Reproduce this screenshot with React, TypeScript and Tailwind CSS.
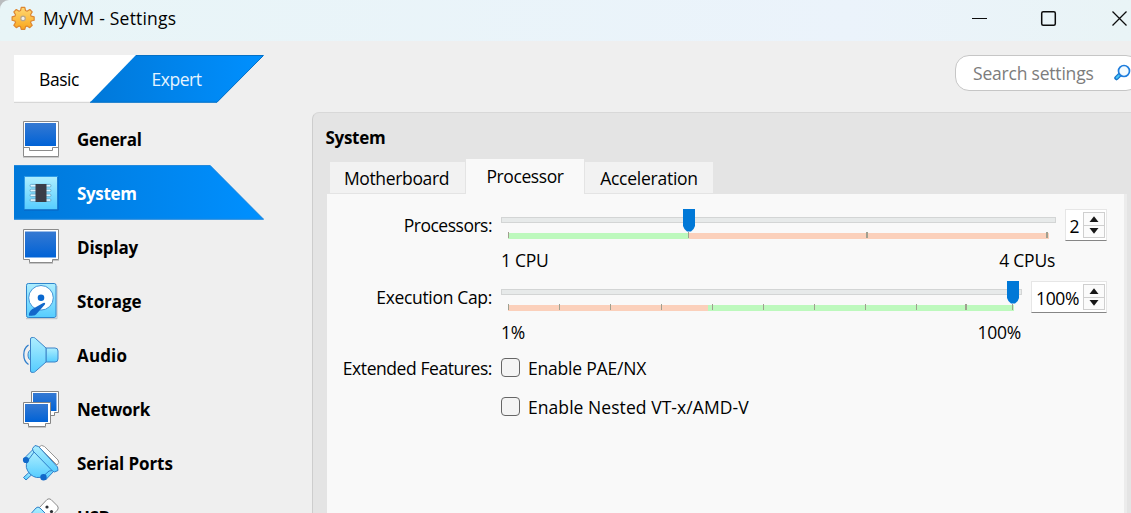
import type { ReactNode } from "react";

function GearIcon() {
  return (
    <svg width="25" height="25" viewBox="0 0 26 27" className="shrink-0">
      <defs>
        <linearGradient id="gear" x1="0" y1="0" x2="0" y2="1">
          <stop offset="0" stopColor="#ffd873" />
          <stop offset="1" stopColor="#f9a61c" />
        </linearGradient>
      </defs>
      <g fill="url(#gear)" stroke="#dd8630" strokeWidth="1.3" strokeLinejoin="round">
        <path d="M10.6 1.5h3.8l.8 3.4 1.6.7 3-1.8 2.6 2.6-1.8 3 .7 1.6 3.2.8v3.6l-3.2.8-.7 1.6 1.8 3-2.6 2.6-3-1.8-1.6.7-.8 3h-3.8l-.8-3-1.6-.7-3 1.8-2.6-2.6 1.8-3-.7-1.6-3-.8v-3.6l3-.8.7-1.6-1.8-3 2.6-2.6 3 1.8 1.6-.7z" />
        <circle cx="12.5" cy="13.4" r="2.4" fill="#f5f2ec" stroke="#b8a68a" />
      </g>
    </svg>
  );
}

function Defs() {
  return (
    <svg width="0" height="0" className="absolute">
      <defs>
        <linearGradient id="screen" x1="0" y1="0" x2="0" y2="1">
          <stop offset="0" stopColor="#3579d2" />
          <stop offset="1" stopColor="#0062d6" />
        </linearGradient>
        <linearGradient id="cyan" x1="0" y1="0" x2="0" y2="1">
          <stop offset="0" stopColor="#aeeefe" />
          <stop offset="1" stopColor="#56cdff" />
        </linearGradient>
      </defs>
    </svg>
  );
}

function GeneralIcon() {
  return (
    <svg width="38" height="38" viewBox="0 0 38 38">
      <path d="M1.5 1.5h35v35h-35z" fill="#fff" stroke="#8b8b8b" />
      <path d="M1.5 27.5h6v3h23v-3h6" fill="none" stroke="#8b8b8b" />
      <path d="M3 3h31v23H3z" fill="url(#screen)" />
      <path d="M1 37.5h36" stroke="#c9c9c9" />
    </svg>
  );
}

function SystemIcon() {
  return (
    <svg width="38" height="38" viewBox="0 0 38 38">
      <path d="M2.5 2.5h33v33h-33z" fill="url(#cyan)" stroke="#2e9be8" />
      <path d="M2 36h34.5M36 3v33" stroke="#0a63bd" fill="none" />
      <g fill="#dff6ff" stroke="#5c9fc4" strokeWidth=".8">
        <rect x="8" y="10.4" width="21" height="2.6" rx="1.3" />
        <rect x="8" y="15.2" width="21" height="2.6" rx="1.3" />
        <rect x="8" y="20" width="21" height="2.6" rx="1.3" />
        <rect x="8" y="24.8" width="21" height="2.6" rx="1.3" />
      </g>
      <path d="M13.5 10h11v18h-11z" fill="#3a3d48" />
    </svg>
  );
}

function DisplayIcon() {
  return (
    <svg width="38" height="38" viewBox="0 0 38 38">
      <path d="M1.5 1.5h35v30h-6v3h-23v-3h-6z" fill="#fff" stroke="#8b8b8b" />
      <path d="M3 3.5h31v26H3z" fill="url(#screen)" />
      <path d="M7 35.5h24M31 32.5h6" stroke="#c4c4c4" />
    </svg>
  );
}

function StorageIcon() {
  return (
    <svg width="38" height="38" viewBox="0 0 38 38">
      <path d="M4 36.7h31V4" stroke="#b9bfc5" fill="none" />
      <rect x="4.5" y="1.5" width="29.5" height="34" rx="1.8" fill="url(#cyan)" stroke="#2e85cc" />
      <circle cx="19" cy="15.8" r="12.3" fill="#fff" stroke="#4094d8" />
      <circle cx="19" cy="15.8" r="3.3" fill="#0a68cf" />
      <path d="M20.7 21.2c1.8-1.3 3.200-.2 2 1.600L14 32.600c-1.300 1.500-4.300 1-7 1.100-.5-2.800 1.800-6 4.400-7.200z" fill="#1367ca" />
    </svg>
  );
}

function AudioIcon() {
  return (
    <svg width="38" height="38" viewBox="0 0 38 38">
      <g fill="url(#cyan)" stroke="#3c83c8" strokeLinejoin="round">
        <path d="M9 14c-4 0-4 10 0 10z" />
        <path d="M24 12h9q3 0 3 3v8q0 3-3 3h-9z" />
        <path d="M8.5 3q0-1.500 1.600-1.500h1.400q1 0 1.800.8L24 12v14L13.200 35.600q-.8.8-1.700.8h-1.400Q8.500 36.400 8.500 35z" />
      </g>
      <path d="M6.500 9C.2 13 .2 24.500 6.500 28.500" fill="none" stroke="#2f7ecb" strokeWidth="1.3" />
    </svg>
  );
}

function NetworkIcon() {
  return (
    <svg width="38" height="38" viewBox="0 0 38 38">
      <path d="M9.500 1.500h27v21h-4v3h-23z" fill="#fff" stroke="#858585" />
      <path d="M11 3h23.500v18H11z" fill="url(#screen)" />
      <path d="M1.500 12.500h27v21h-5v3h-17v-3h-5z" fill="#fff" stroke="#858585" />
      <path d="M3 14h23v18H3z" fill="url(#screen)" />
      <path d="M6 37.500h18" stroke="#c4c4c4" />
    </svg>
  );
}

function SerialIcon() {
  return (
    <svg width="38" height="38" viewBox="0 0 38 38">
      <path d="M17 3q2.500-3 5.500-.5L36 16q2 2.500-1 5z" fill="#fff" stroke="#959595" />
      <g stroke="#307fc9" strokeLinejoin="round" fill="url(#cyan)">
        <path d="M8 27.500l-6.500 6 2.500 2.500 6.500-6z" />
        <path d="M1.500 15l9.500-9.500 3.500 3.500-8.500 9zM20 32l7.500-8 4.500 3-8.500 9z" />
        <path d="M12.500 7.500L31 26.500 27 27l-5.500 5q-7 4-13.500-2Q2 23.500 5.500 17z" />
        <path d="M10.500 4.500l2.500-3 3.500 1 19 20.500.5 3.500-3.500 1.500-2-1L11 7z" />
      </g>
      <circle cx="4" cy="16" r="3.100" fill="#1268c9" />
      <circle cx="21.500" cy="33.200" r="3.200" fill="#1268c9" />
    </svg>
  );
}

function UsbIcon() {
  return (
    <svg width="38" height="38" viewBox="0 0 38 38">
      <path d="M17.500 9.500l7.500-8q2-1.500 4 0l6.500 6.500q1.500 2 0 4l-8 8z" fill="#fff" stroke="#8b8b8b" />
      <circle cx="25" cy="9" r="1.600" fill="#2e3035" />
      <circle cx="29.500" cy="13.500" r="1.600" fill="#2e3035" />
      <path d="M2 23.500L14 10q2-2 4 0l10 10-14 14z" fill="url(#cyan)" stroke="#307fc9" />
    </svg>
  );
}

const items: { label: string; icon: ReactNode; track: string }[] = [
  { label: "General", icon: <GeneralIcon />, track: "tracking-[-0.3px]" },
  { label: "System", icon: <SystemIcon />, track: "tracking-[-0.35px]" },
  { label: "Display", icon: <DisplayIcon />, track: "tracking-[-0.15px]" },
  { label: "Storage", icon: <StorageIcon />, track: "tracking-[-0.05px]" },
  { label: "Audio", icon: <AudioIcon />, track: "tracking-[0.15px]" },
  { label: "Network", icon: <NetworkIcon />, track: "tracking-[-0.2px]" },
  { label: "Serial Ports", icon: <SerialIcon />, track: "tracking-[-0.1px]" },
  { label: "USB", icon: <UsbIcon />, track: "tracking-[-0.3px]" },
];

function TitleBar() {
  return (
    <div className="shrink-0 bg-[#b9bcbe]">
      <header className="flex h-[41px] items-center rounded-tl-[9px] bg-linear-to-r from-[#e8f5f7] via-[#ebf3fb] via-75% to-[#e9f4f6] pl-[11px]">
        <div className="flex h-full items-start pt-[6px]">
          <GearIcon />
        </div>
        <h1 className="-mt-[5px] ml-[7px] leading-[24px] tracking-[0.2px]">MyVM - Settings</h1>
        <div className="-mt-[5px] ml-auto flex w-[160px] shrink-0 items-center">
          <svg width="160" height="20" viewBox="0 0 160 20" fill="none" stroke="#0c0c0c">
            <path d="M1 10.500h15" />
            <rect x="70.700" y="3.700" width="13.600" height="13.600" rx="1.500" strokeWidth="1.500" />
            <path d="M141.500 3.500l14 14M155.500 3.500l-14 14" strokeWidth="1.300" />
          </svg>
        </div>
      </header>
    </div>
  );
}

function ModeSwitch() {
  return (
    <div className="relative flex h-[48px] w-[250px]">
      <svg width="250" height="48" viewBox="0 0 250 48" className="absolute inset-0">
        <defs>
          <linearGradient id="expert" x1="0" y1="0" x2="1" y2="0">
            <stop offset="0" stopColor="#0078d9" />
            <stop offset="1" stopColor="#0090ff" />
          </linearGradient>
        </defs>
        <path d="M0 0h122L76 47.500H0z" fill="#fff" />
        <path d="M0 47.300h76" stroke="#cfcfcf" />
        <path d="M122 0h128L203 47.500H76z" fill="url(#expert)" />
        <path d="M122 .5h127M249.500 .5L203 47.200H76" fill="none" stroke="#0470c6" />
      </svg>
      <span className="relative w-[90px] text-center leading-[49px] tracking-[-0.45px]">Basic</span>
      <span className="relative ml-[22px] w-[101px] text-center leading-[49px] tracking-[-0.5px] text-[#e6f4ff]">Expert</span>
    </div>
  );
}

function Sidebar() {
  return (
    <nav className="flex flex-col text-[17px]">
      {items.map(({ label, icon, track }, i) => (
        <div key={label} className="relative flex h-[54px] shrink-0 items-center">
          {i === 1 && (
            <svg width="250" height="55" viewBox="0 0 250 55" className="absolute -top-px left-0">
              <path d="M0 0h196l54 54.500H0z" fill="url(#expert)" />
              <path d="M0 .5h196l53.500 53.700H0" fill="none" stroke="#2389dc" />
            </svg>
          )}
          <div className="relative ml-[8px] w-[38px]">{icon}</div>
          <span className={`relative ml-[17px] pt-[2px] font-bold ${track} ${i === 1 ? "text-white" : "text-black"}`}>{label}</span>
        </div>
      ))}
    </nav>
  );
}

type SliderProps = {
  width: string;
  barWidth: string;
  colors: [string, string];
  split: number;
  ticks: { x: number; w: number }[];
  handle: number;
  min: string;
  max: string;
};

function Slider({ width, barWidth, colors, split, ticks, handle, min, max }: SliderProps) {
  return (
    <div className={`relative flex shrink-0 flex-col pt-[8px] ${width}`}>
      <div className="h-[6px] border border-[#d3d5d5] bg-[#e7eaea]" />
      <div className={`mt-[10px] ml-[7px] flex h-[6px] ${barWidth} ${colors[1]}`}>
        <div className={`h-full ${colors[0]}`} style={{ width: split }} />
      </div>
      {ticks.map((t) => (
        <div key={t.x} className="absolute top-[23px] h-[6px] bg-[#a0a090]" style={{ left: t.x, width: t.w }} />
      ))}
      <svg width="12" height="23" viewBox="0 0 12 23" className="absolute top-0" style={{ left: handle }}>
        <path d="M0 0h12v17q-1 3.500-4 5.500H4Q1 20.500 0 17z" fill="#0078d7" />
      </svg>
      <div className="mt-[9px] -mr-px flex justify-between pr-[2px] leading-[24px] tracking-[-0.25px]">
        <span>{min}</span>
        <span>{max}</span>
      </div>
    </div>
  );
}

function Spin({ value, width }: { value: string; width: string }) {
  return (
    <div className={`flex h-[32px] shrink-0 border border-[#e6e6e6] border-b-[#868686] bg-white pt-[2px] pr-px ${width}`}>
      <span className="flex-1 pr-[4px] text-right leading-[28px] tracking-[-0.4px]">{value}</span>
      <div className="flex h-[26px] w-[22px] flex-col border border-[#cfcfcf] bg-[#fbfbfb]">
        <div className="flex flex-1 items-center justify-center border-b border-[#cfcfcf]">
          <svg width="10" height="6" viewBox="0 0 10 6"><path d="M.5 6L5 .2 9.500 6z" fill="#161616" /></svg>
        </div>
        <div className="flex flex-1 items-center justify-center">
          <svg width="10" height="6" viewBox="0 0 10 6"><path d="M.5 0L5 5.800 9.500 0z" fill="#161616" /></svg>
        </div>
      </div>
    </div>
  );
}

function FormLabel({ children, track }: { children: ReactNode; track: string }) {
  return <span className={`mr-[9px] w-[165px] shrink-0 text-right leading-[32px] ${track}`}>{children}</span>;
}

function Check({ label, track }: { label: string; track: string }) {
  return (
    <div className="flex items-center">
      <div className="size-[19px] rounded-[4px] border border-[#666] bg-[#f4f4f4]" />
      <span className={`ml-[8px] ${track}`}>{label}</span>
    </div>
  );
}

const execTicks = [
  { x: 7, w: 1 }, { x: 58, w: 1 }, { x: 109, w: 1 }, { x: 160, w: 1 }, { x: 211, w: 1 }, { x: 262, w: 1 },
  { x: 313, w: 1 }, { x: 364, w: 1 }, { x: 415, w: 1 }, { x: 464, w: 2 }, { x: 511, w: 1 },
];

function ProcessorPage() {
  return (
    <div className="mr-[4px] ml-[14px] flex flex-1 flex-col border-r-3 border-[#ececec] bg-[#f9f9f9] pt-[15px]">
      <div className="flex h-[72px] shrink-0 items-start">
        <FormLabel track="tracking-[-0.5px]">Processors:</FormLabel>
        <Slider width="w-[555px]" barWidth="w-[541px]" colors={["bg-[#bdf9bd]", "bg-[#fbd0bb]"]} split={181}
          ticks={[{ x: 7, w: 1 }, { x: 187, w: 1 }, { x: 365, w: 2 }, { x: 545, w: 2 }]} handle={182} min="1 CPU" max="4 CPUs" />
        <div className="ml-[9px]"><Spin value="2" width="w-[42px]" /></div>
      </div>
      <div className="flex h-[67px] shrink-0 items-start">
        <FormLabel track="tracking-[-0.33px]">Execution Cap:</FormLabel>
        <Slider width="w-[521px]" barWidth="w-[506px]" colors={["bg-[#fbd0bb]", "bg-[#bdf9bd]"]} split={200}
          ticks={execTicks} handle={506} min="1%" max="100%" />
        <div className="ml-[9px]"><Spin value="100%" width="w-[76px]" /></div>
      </div>
      <div className="flex h-[39px] shrink-0 items-center">
        <FormLabel track="tracking-[-0.43px]">Extended Features:</FormLabel>
        <Check label="Enable PAE/NX" track="tracking-[-0.2px]" />
      </div>
      <div className="flex h-[39px] shrink-0 items-center pl-[174px]">
        <Check label="Enable Nested VT-x/AMD-V" track="tracking-[0.06px]" />
      </div>
    </div>
  );
}

export default function App() {
  return (
    <div className="flex h-[513px] w-[1131px] flex-col overflow-hidden bg-[#efefef] font-['Open_Sans',sans-serif] text-[17.5px] leading-[24px] text-black">
      <Defs />
      <TitleBar />
      <div className="flex h-[71px] shrink-0 items-start justify-between pt-[14px] pl-[14px]">
        <ModeSwitch />
        <div className="-mr-[9px] flex h-[36px] w-[185px] shrink-0 items-center rounded-[14px] border border-[#c6c6c6] bg-white pl-[17px]">
          <span className="w-[141px] shrink-0 tracking-[-0.2px] text-[#7c7c7c]">Search settings</span>
          <svg width="18" height="18" viewBox="0 0 18 18" className="shrink-0">
            <path d="M5.500 11L2.500 14" stroke="#1673ca" strokeWidth="4.500" strokeLinecap="round" />
            <path d="M5.500 11L2.700 13.800" stroke="#45c4f7" strokeWidth="2" strokeLinecap="round" />
            <circle cx="10" cy="7" r="5.500" fill="#f3fbff" stroke="#1e7ddd" strokeWidth="1.700" />
          </svg>
        </div>
      </div>
      <div className="flex min-h-0 flex-1">
        <div className="w-[298px] shrink-0 overflow-hidden pl-[14px]">
          <Sidebar />
        </div>
        <main className="ml-[14px] flex min-w-0 flex-1 flex-col rounded-tl-[7px] border-t border-l border-[#cdcdcd] border-t-[#d8d8d8] bg-[#e4e4e4]">
          <h2 className="mt-[13px] ml-[12.5px] text-[17px] font-bold tracking-[-0.3px]">System</h2>
          <div className="mt-[9px] ml-[17px] flex h-[35px] shrink-0 items-end">
            <div className="mb-px h-[31px] w-[135px] bg-[#f2f2f2] pr-[2px] text-center leading-[33px] tracking-[-0.35px]">Motherboard</div>
            <div className="ml-px h-[35px] w-[118px] bg-[#f9f9f9] text-center leading-[35px] tracking-[-0.4px]">Processor</div>
            <div className="mb-px ml-px h-[31px] w-[128px] bg-[#f2f2f2] text-center leading-[33px] tracking-[-0.25px]">Acceleration</div>
          </div>
          <ProcessorPage />
        </main>
      </div>
    </div>
  );
}
